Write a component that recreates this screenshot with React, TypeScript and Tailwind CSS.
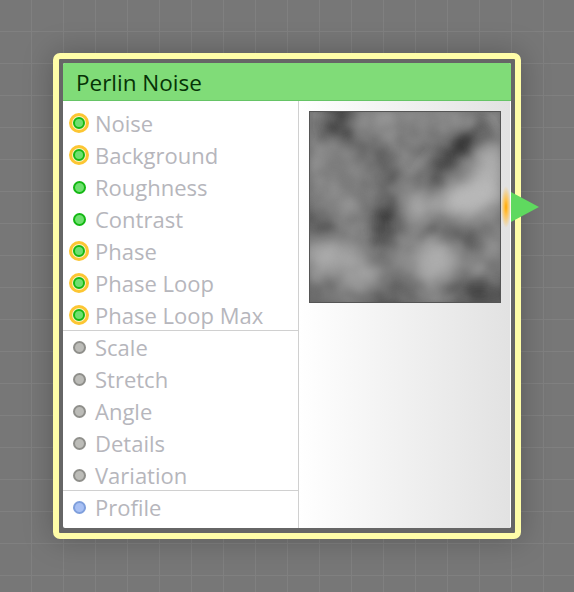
import React from 'react';

type PortKind = 'ring' | 'green' | 'grey' | 'blue';

const SECTIONS: { label: string; port: PortKind }[][] = [
  [
    { label: 'Noise', port: 'ring' },
    { label: 'Background', port: 'ring' },
    { label: 'Roughness', port: 'green' },
    { label: 'Contrast', port: 'green' },
    { label: 'Phase', port: 'ring' },
    { label: 'Phase Loop', port: 'ring' },
    { label: 'Phase Loop Max', port: 'ring' },
  ],
  [
    { label: 'Scale', port: 'grey' },
    { label: 'Stretch', port: 'grey' },
    { label: 'Angle', port: 'grey' },
    { label: 'Details', port: 'grey' },
    { label: 'Variation', port: 'grey' },
  ],
  [{ label: 'Profile', port: 'blue' }],
];

// x, y, rx, ry, rotation, grey
const BLOBS: [number, number, number, number, number, string][] = [
  [30, 10, 16, 20, 0, '#3a3a3a'],
  [72, 8, 24, 12, 0, '#8a8a8a'],
  [125, 6, 30, 12, 0, '#868686'],
  [150, 35, 38, 12, -40, '#363636'],
  [125, 65, 12, 20, 20, '#505050'],
  [62, 40, 13, 15, 0, '#585858'],
  [25, 55, 24, 16, 0, '#7e7e7e'],
  [180, 62, 14, 30, 0, '#b0b0b0'],
  [160, 86, 32, 18, -15, '#b8b8b8'],
  [108, 95, 15, 15, 0, '#a4a4a4'],
  [78, 85, 10, 34, 0, '#505050'],
  [76, 118, 14, 22, 0, '#343434'],
  [10, 108, 15, 15, 0, '#484848'],
  [35, 92, 16, 14, 0, '#8a8a8a'],
  [140, 126, 30, 11, 10, '#505050'],
  [22, 144, 28, 16, 0, '#a4a4a4'],
  [50, 165, 22, 14, 0, '#949494'],
  [126, 148, 24, 20, 0, '#a8a8a8'],
  [92, 142, 14, 12, 0, '#848484'],
  [184, 132, 12, 14, 0, '#868686'],
  [170, 182, 36, 12, 0, '#404040'],
  [78, 186, 20, 13, 0, '#444444'],
  [10, 184, 18, 12, 0, '#5c5c5c'],
  [118, 180, 16, 9, 0, '#707070'],
];

const Port = ({ kind }: { kind: PortKind }) => {
  if (kind === 'ring') {
    return (
      <span className="flex h-[20px] w-[20px] items-center justify-center rounded-full border-[3px] border-[#fcc633] bg-[#fdf0c0]">
        <span className="h-[12px] w-[12px] shrink-0 rounded-full border-2 border-[#14b814] bg-[#6fe06f]" />
      </span>
    );
  }
  if (kind === 'green') {
    return <span className="h-[13px] w-[13px] rounded-full border-2 border-[#14b814] bg-[#6fe06f]" />;
  }
  if (kind === 'grey') {
    return <span className="h-[13px] w-[13px] rounded-full border-2 border-[#8f8f8b] bg-[#bcbcb8]" />;
  }
  return <span className="h-[13px] w-[13px] rounded-full border-2 border-[#7f9fdc] bg-[#a8c0f4]" />;
};

const NoisePreview = () => (
  <svg width="190" height="190" viewBox="0 0 190 190" className="block">
    <defs>
      <filter id="soft" x="-20%" y="-20%" width="140%" height="140%">
        <feGaussianBlur stdDeviation="7.5" />
      </filter>
      <filter id="grain" x="0" y="0" width="100%" height="100%">
        <feTurbulence type="fractalNoise" baseFrequency="0.045" numOctaves="2" seed="7" />
        <feColorMatrix type="matrix" values="0 0 0 0 0.5  0 0 0 0 0.5  0 0 0 0 0.5  1.6 0 0 0 -0.55" />
        <feGaussianBlur stdDeviation="2.5" />
      </filter>
      <clipPath id="box">
        <rect width="190" height="190" />
      </clipPath>
    </defs>
    <g clipPath="url(#box)">
      <rect width="190" height="190" fill="#747474" />
      <g filter="url(#soft)">
        {BLOBS.map(([x, y, rx, ry, rot, fill], i) => (
          <ellipse key={i} cx={x} cy={y} rx={rx} ry={ry} fill={fill} transform={`rotate(${rot} ${x} ${y})`} />
        ))}
      </g>
      <rect width="190" height="190" filter="url(#grain)" opacity="0.5" />
    </g>
  </svg>
);

export default function App() {
  return (
    <div className="h-[592px] w-[574px] overflow-hidden bg-[#777777] bg-[linear-gradient(to_right,#808080_1px,transparent_1px),linear-gradient(to_bottom,#808080_1px,transparent_1px)] bg-[size:32px_32px] bg-[position:31px_31px] pl-[53px] pt-[53px] font-['Open_Sans','Noto_Sans',sans-serif]">
      <div className="relative h-[486px] w-[468px] rounded-[7px] border-[6px] border-[#fffda8] bg-[#666666] px-[4px] pb-[5px] pt-[4px] shadow-[0_0_30px_rgba(0,0,0,0.25)]">
        <div className="flex h-full flex-col overflow-hidden rounded-[2px] bg-white">
          <div className="flex h-[38px] shrink-0 items-center border-b border-[#66c466] bg-[#80dc78] pl-[13px] pt-[3px] text-[22.5px] leading-none text-[#063306]">
            Perlin Noise
          </div>
          <div className="flex flex-1">
            <div className="w-[236px] shrink-0 border-r border-[#d0d0d0] pt-[7px]">
              {SECTIONS.map((rows, s) => (
                <div
                  key={s}
                  className={s === 0 ? 'h-[222px]' : s === 1 ? 'h-[160px] border-t border-[#d0d0d0] pt-[1px]' : 'border-t border-[#d0d0d0] pt-[1px]'}
                >
                  {rows.map((row) => (
                    <div key={row.label} className="flex h-8 -translate-y-px items-center">
                      <div className="flex w-[32px] items-center justify-center">
                        <Port kind={row.port} />
                      </div>
                      <span className="text-[22px] leading-none text-[#b6b6bc]">{row.label}</span>
                    </div>
                  ))}
                </div>
              ))}
            </div>
            <div className="flex-1 border-r border-white bg-gradient-to-r from-white to-[#e2e2e2] pl-[10px] pt-[10px]">
              <div className="h-[192px] w-[192px] border border-[#555555]">
                <NoisePreview />
              </div>
            </div>
          </div>
        </div>
        {/* Output port */}
        <div className="absolute left-[442px] top-[127px] h-[42px] w-[10px] bg-[radial-gradient(closest-side,#ffa800_0%,#ffc24d_35%,transparent_100%)]" />
        <svg className="absolute left-[452px] top-[133px]" width="28" height="30" viewBox="0 0 28 30">
          <polygon points="0,0 28,15 0,30" fill="#5fd95f" />
        </svg>
      </div>
    </div>
  );
}
